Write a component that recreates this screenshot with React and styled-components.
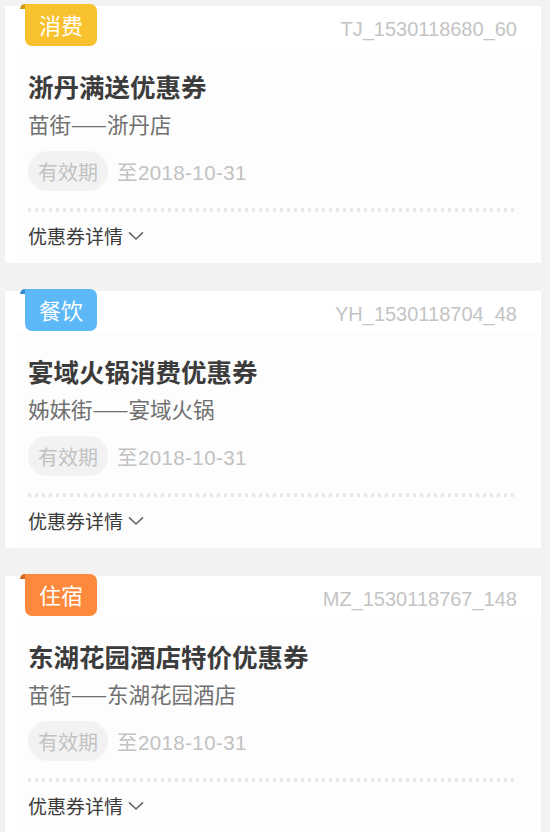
import React from "react";
import styled, { createGlobalStyle } from "styled-components";

const GlobalStyle = createGlobalStyle`
  html, body { margin: 0; padding: 0; background: #f2f2f2; }
  body { font-family: "Liberation Sans", "Noto Sans CJK SC", sans-serif; }
`;

const Page = styled.div`
  display: flex;
  flex-direction: column;
  gap: 28px;
  padding: 6px 9px 0 5px;
`;

const Card = styled.div`
  background: #ffffff;
  display: flex;
  flex-direction: column;
`;

const Header = styled.div`
  display: flex;
  justify-content: space-between;
  align-items: flex-start;
  height: 42px;
  padding: 0 24px 0 20px;
`;

const Tag = styled.div`
  position: relative;
  margin-top: -2px;
  width: 72px;
  height: 42px;
  line-height: 41px;
  text-align: center;
  color: #ffffff;
  font-size: 22px;
  font-family: "Noto Sans CJK SC", sans-serif;
  background: ${(p) => p.$color};
  border-radius: 0 7px 7px 7px;
  &::before {
    content: "";
    position: absolute;
    left: -5px;
    top: 0;
    width: 5px;
    height: 5px;
    background: ${(p) => p.$fold};
    border-top-left-radius: 5px;
  }
`;

const Code = styled.div`
  padding-top: 3px;
  line-height: 40px;
  font-size: 20px;
  color: #c4c4c4;
`;

const Panel = styled.div`
  margin: 0 4px 0 11px;
  padding: 20px 19px 12px 12px;
  background: #fdfdfd;
  display: flex;
  flex-direction: column;
  align-items: flex-start;
`;

const Title = styled.div`
  font-family: "Noto Sans CJK SC", sans-serif;
  font-weight: 700;
  font-size: 25.5px;
  line-height: 36px;
  color: #3c3c3c;
`;

const Shop = styled.div`
  margin-top: 5px;
  font-family: "Noto Sans CJK SC", sans-serif;
  font-size: 21.5px;
  line-height: 30px;
  color: #707070;
`;

const ValidRow = styled.div`
  margin-top: 12px;
  display: flex;
  align-items: center;
  gap: 9px;
  height: 40px;
`;

const Pill = styled.span`
  display: inline-flex;
  align-items: center;
  justify-content: center;
  width: 80px;
  height: 40px;
  border-radius: 20px;
  background: #f2f2f2;
  color: #c2c2c2;
  font-family: "Noto Sans CJK SC", sans-serif;
  font-size: 20px;
`;

const Expire = styled.span`
  color: #c2c2c2;
  font-size: 20.5px;
  letter-spacing: 0.4px;
`;

const Dots = styled.div`
  margin-top: 17px;
  align-self: stretch;
  height: 4px;
  background-image: repeating-linear-gradient(
    to right,
    #e8e8e8 0,
    #e8e8e8 3.5px,
    transparent 3.5px,
    transparent 7px
  );
`;

const Details = styled.div`
  margin-top: 9px;
  display: flex;
  align-items: center;
  gap: 5px;
  line-height: 30px;
  font-family: "Noto Sans CJK SC", sans-serif;
  font-size: 19px;
  color: #3a3a3a;
`;

const Chevron = () => (
  <svg width="16" height="10" viewBox="0 0 16 10" fill="none">
    <path d="M1.5 1.8 L8 8 L14.5 1.8" stroke="#666" strokeWidth="1.6" strokeLinecap="round" strokeLinejoin="round" />
  </svg>
);

const coupons = [
  {
    tag: "消费",
    color: "#f8c22e",
    fold: "#d39a14",
    code: "TJ_1530118680_60",
    title: "浙丹满送优惠券",
    shop: "苗街——浙丹店",
  },
  {
    tag: "餐饮",
    color: "#5cb8f7",
    fold: "#348fd2",
    code: "YH_1530118704_48",
    title: "宴域火锅消费优惠券",
    shop: "姊妹街——宴域火锅",
  },
  {
    tag: "住宿",
    color: "#fd8a3c",
    fold: "#d8651c",
    code: "MZ_1530118767_148",
    title: "东湖花园酒店特价优惠券",
    shop: "苗街——东湖花园酒店",
  },
];

export default function App() {
  return (
    <>
      <GlobalStyle />
      <Page>
        {coupons.map((c) => (
          <Card key={c.code}>
            <Header>
              <Tag $color={c.color} $fold={c.fold}>{c.tag}</Tag>
              <Code>{c.code}</Code>
            </Header>
            <Panel>
              <Title>{c.title}</Title>
              <Shop>{c.shop}</Shop>
              <ValidRow>
                <Pill>有效期</Pill>
                <Expire>至2018-10-31</Expire>
              </ValidRow>
              <Dots />
              <Details>
                优惠券详情
                <Chevron />
              </Details>
            </Panel>
          </Card>
        ))}
      </Page>
    </>
  );
}
